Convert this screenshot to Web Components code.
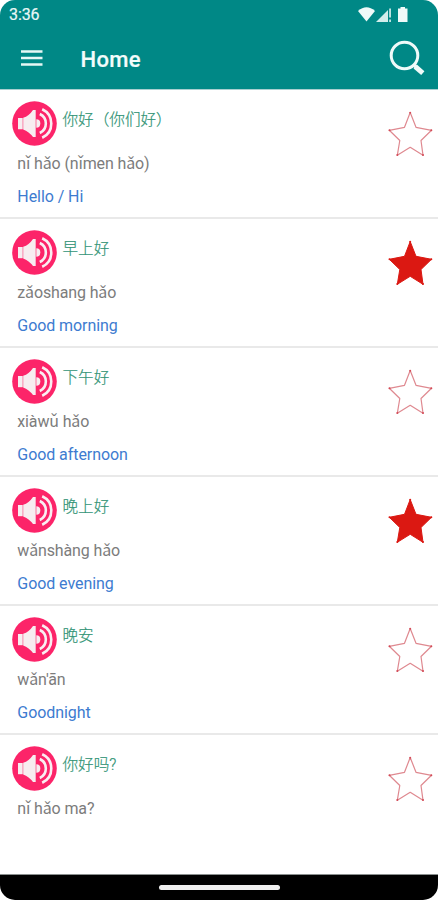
<!DOCTYPE html>
<html lang="en">
<head>
<meta charset="utf-8">
<title>Home</title>
<style>
html,body{margin:0;height:100%;background:#fff}
body{font-family:Roboto,"Noto Sans CJK SC",sans-serif}
</style>
</head>
<body>
<phrase-app></phrase-app>
<script>
function define(name, html) {
  const tpl = document.createElement('template');
  tpl.innerHTML = html;
  customElements.define(name, class extends HTMLElement {
    constructor() {
      super();
      this.attachShadow({mode: 'open'}).append(tpl.content.cloneNode(true));
    }
  });
}

define('status-bar', `
<style>
:host{display:flex;height:29px;align-items:center;justify-content:space-between;padding:0 29px 0 9px;box-sizing:border-box;color:#e9f7f6}
time{font-size:16px;line-height:29px;letter-spacing:-.1px;-webkit-text-stroke:.2px}
svg{display:block}
</style>
<time>3:36</time>
<svg width="52" height="18" viewBox="357 5.500 52 18" fill="#effaf9">
<path d="M358 10.500Q366.500 3 375 10.500L366.500 21Z"/>
<path d="M376 21.500L388 9.500V21.500Z" opacity=".88"/>
<path d="M389.300 8h1.500v9h-1.500zM389.300 19h1.500v2.500h-1.500z"/>
<path d="M400.500 6.500h4.500v1.500h2.500v13.500h-9.500V8h2.500z"/>
</svg>`);

define('title-bar', `
<style>
:host{display:flex;height:60px;align-items:center;color:#f3fcfb;padding-left:21px;padding-right:13px}
h1{margin:0 auto 0 37.500px;font-size:22px;line-height:26px;font-weight:500;letter-spacing:.35px;padding-top:2px;-webkit-text-stroke:.2px}
svg{display:block;flex:none}
</style>
<svg width="22" height="60" viewBox="21 29 22 60" fill="#e6f7f5"><path d="M21 50.200h21.500v2.500H21zM21 56.700h21.500v2.500H21zM21 63.200h21.500v2.500H21z"/></svg>
<h1>Home</h1>
<svg width="38" height="60" viewBox="387 29 38 60" fill="none" stroke="#effaf9"><circle cx="404.500" cy="55.500" r="13.300" stroke-width="3"/><path d="M413.500 64.500l3 3" stroke-width="3.500"/><path d="M415.200 66.500l7.600 6.600" stroke-width="5"/></svg>`);

define('sound-icon', `
<style>:host{display:block;width:45px;height:45px}svg{display:block}</style>
<svg width="45" height="45" viewBox="0 0 45 45">
<circle cx="22.500" cy="22.500" r="22.300" fill="#fc2469"/>
<g fill="#f7edf0">
<path d="M6 17h4.700v11.200H6z"/>
<path d="M11.200 16.800Q17 15 21 9h2.700v27H21Q17 30.500 11.200 28.400z"/>
<path d="M24.300 18.300a4 4.200 0 0 1 0 8.400z"/>
</g>
<path d="M27.800 13a10.500 10.500 0 0 1 0 19M30.200 8.200a15.800 15.800 0 0 1 0 28.600" fill="none" stroke="#faeef2" stroke-width="2.600"/>
</svg>`);

define('star-toggle', `
<style>
:host{display:block;width:46px;height:46px}
svg{display:block;overflow:visible}
path{fill:#fff;stroke:#df8990;stroke-width:1.200;stroke-linejoin:round}
circle{fill:#d34b57}
:host([on]) path{fill:#db1812;stroke:#db1812;stroke-width:1}
:host([on]) circle{fill:#db1812}
</style>
<svg width="46" height="46" viewBox="387 111 46 46">
<path d="M410.200 112.500L416 127.300L431.500 130.300L421 140.500L423 155.300L410.200 147.300L397.300 155.300L399.800 140.500L389.300 130.300L404.500 127.300Z"/>
<circle cx="410.200" cy="112.800" r="1"/><circle cx="431.300" cy="130.300" r="1"/><circle cx="423" cy="155" r="1"/><circle cx="397.300" cy="155" r="1"/><circle cx="389.500" cy="130.300" r="1"/>
</svg>`);

define('phrase-row', `
<style>
:host{display:grid;grid-template-columns:1fr 46px;height:129px;box-sizing:border-box;padding:11px 5px 0 12px;border-bottom:2px solid #e9e9e9;align-items:start}
:host(:last-of-type){border:0}
.head{display:flex;gap:5.500px}
.zh{color:#2f9374;font-size:15.600px;line-height:24px;padding-top:7px;font-weight:300;white-space:pre;-webkit-text-stroke:.2px}
.py,.en{padding-left:5.300px;font-size:16px;line-height:20px;white-space:pre}
.py{color:#7c7c7c;margin-top:8px;letter-spacing:-.14px}
.en{color:#3d7bd0;margin-top:13px;letter-spacing:-.07px}
star-toggle{margin-top:10px}
</style>
<div><div class="head"><sound-icon></sound-icon><div class="zh"><slot name="zh"></slot></div></div>
<div class="py"><slot name="py"></slot></div><div class="en"><slot name="en"></slot></div></div>
<star-toggle></star-toggle>`);

define('nav-pill', `
<style>
:host{display:flex;height:26px;background:#000;justify-content:center;align-items:center;border-top:1px solid #8a8f8e;box-sizing:border-box}
i{display:block;width:121px;height:5px;border-radius:2.500px;background:#efefef}
</style><i></i>`);

define('phrase-app', `
<style>
:host{display:flex;flex-direction:column;height:900px;width:438px;background:#fff;border-radius:15px;overflow:hidden}
header{background:#008886;height:89px;flex:none;border-bottom:1px solid #a9cfd0}
main{flex:1;min-height:0;overflow:hidden}
nav-pill{flex:none}
</style>
<header><status-bar></status-bar><title-bar></title-bar></header>
<main></main>
<nav-pill></nav-pill>`);

const phrases = [
  ['你好（你们好）', 'nǐ hǎo (nǐmen hǎo)', 'Hello / Hi', false],
  ['早上好', 'zǎoshang hǎo', 'Good morning', true],
  ['下午好', 'xiàwǔ hǎo', 'Good afternoon', false],
  ['晚上好', 'wǎnshàng hǎo', 'Good evening', true],
  ['晚安', "wǎn'ān", 'Goodnight', false],
  ['你好吗?', 'nǐ hǎo ma?', '', false]
];
const list = document.querySelector('phrase-app').shadowRoot.querySelector('main');
for (const [zh, py, en, on] of phrases) {
  const row = document.createElement('phrase-row');
  for (const [slot, text] of [['zh', zh], ['py', py], ['en', en]]) {
    if (!text) continue;
    const span = document.createElement('span');
    span.slot = slot;
    span.textContent = text;
    if (slot === 'zh') span.lang = 'zh-CN';
    row.append(span);
  }
  row.shadowRoot.querySelector('star-toggle').toggleAttribute('on', on);
  list.append(row);
}
</script>
</body>
</html>
